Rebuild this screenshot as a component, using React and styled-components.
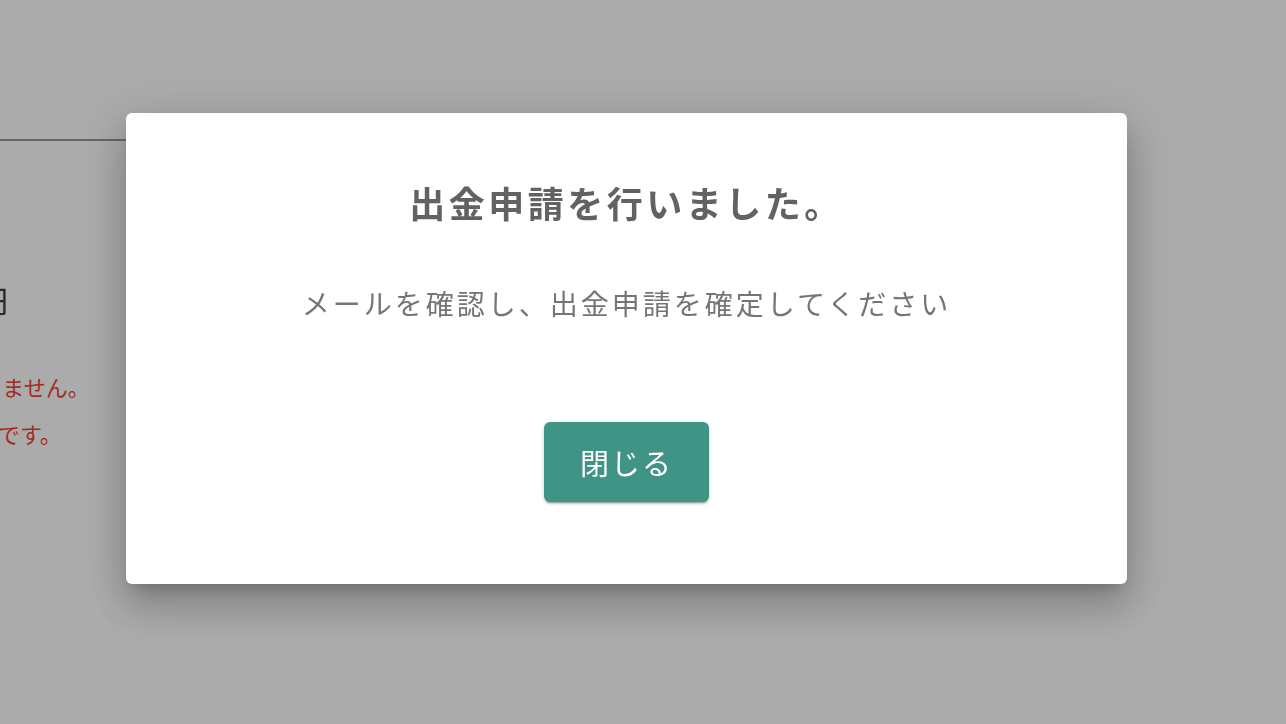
import React from "react";
import styled, { createGlobalStyle } from "styled-components";

const Global = createGlobalStyle`
  html, body { margin: 0; padding: 0; background: #ffffff; }
  body { font-family: "Noto Sans CJK JP", "Noto Sans", sans-serif; overflow: hidden; }
`;

const Page = styled.div`
  width: 1286px;
  height: 724px;
  overflow: hidden;
  background: #ffffff;
`;

const Header = styled.header`
  width: 640px;
  height: 139px;
  border-bottom: 2px solid #989898;
`;

const Content = styled.main`
  margin-left: -393px;
  width: 520px;
  padding-top: 140px;
  display: flex;
  flex-direction: column;
`;

const AmountRow = styled.div`
  width: 401px;
  text-align: right;
  font-size: 30px;
  line-height: 36px;
  color: #3c3c3c;
  white-space: nowrap;
`;

const ErrorText = styled.p`
  margin: ${(p) => p.$top}px 0 0;
  font-size: 22px;
  line-height: 28px;
  color: #f44336;
  white-space: nowrap;
`;

const Backdrop = styled.div`
  position: fixed;
  inset: 0;
  background: rgba(0, 0, 0, 0.33);
  display: flex;
  align-items: center;
  justify-content: center;
  padding: 0 33px 27px 0;
`;

const Dialog = styled.div`
  width: 1001px;
  height: 471px;
  box-sizing: border-box;
  background: #ffffff;
  border-radius: 6px;
  box-shadow: 0px 11px 15px -7px rgba(0, 0, 0, 0.2),
    0px 24px 38px 3px rgba(0, 0, 0, 0.14), 0px 9px 46px 8px rgba(0, 0, 0, 0.12);
  padding: 65px 40px 82px;
  display: flex;
  flex-direction: column;
  align-items: center;
`;

const Title = styled.h2`
  margin: 0;
  font-size: 36px;
  line-height: 48px;
  font-weight: 700;
  letter-spacing: 3.5px;
  color: #626262;
`;

const Message = styled.p`
  margin: 59px 0 0;
  font-size: 28px;
  line-height: 36px;
  font-weight: 400;
  letter-spacing: 3px;
  color: #757575;
`;

const CloseButton = styled.button`
  margin-top: 101px;
  width: 165px;
  height: 80px;
  border: none;
  border-radius: 6px;
  background: #409485;
  color: #ffffff;
  font-family: inherit;
  font-size: 29px;
  letter-spacing: 2px;
  cursor: pointer;
  box-shadow: 0px 3px 1px -2px rgba(0, 0, 0, 0.2),
    0px 2px 2px 0px rgba(0, 0, 0, 0.14), 0px 1px 5px 0px rgba(0, 0, 0, 0.12);
`;

export default function App() {
  return (
    <>
      <Global />
      <Page>
        <Header />
        <Content>
          <AmountRow>1,000 円</AmountRow>
          <ErrorText $top={55}>出金可能額が不足しているため出金できません。</ErrorText>
          <ErrorText $top={19}>※出金は1回あたり1000円以上から可能です。</ErrorText>
        </Content>
      </Page>
      <Backdrop>
        <Dialog role="dialog">
          <Title>出金申請を行いました。</Title>
          <Message>メールを確認し、出金申請を確定してください</Message>
          <CloseButton>閉じる</CloseButton>
        </Dialog>
      </Backdrop>
    </>
  );
}
